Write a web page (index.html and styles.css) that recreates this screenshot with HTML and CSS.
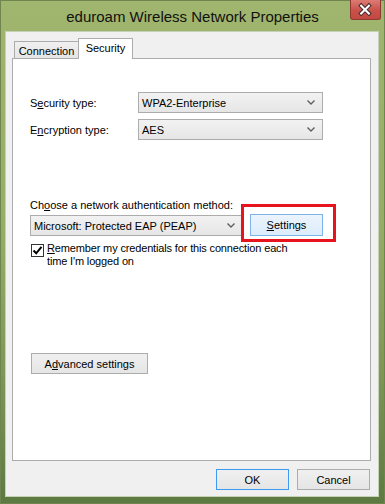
FILE: index.html
```html
<!DOCTYPE html>
<html lang="en">
<head>
    <meta charset="UTF-8">
    <meta name="viewport" content="width=device-width, initial-scale=1.0">
    <title>eduroam Wireless Network Properties</title>
    <link rel="stylesheet" href="styles.css">
</head>
<body>
    <!-- Janela principal -->
    <div class="window">
        <div class="titlebar">
            <span class="title">eduroam Wireless Network Properties</span>
            <div class="close-btn">
                <svg width="31" height="20" viewBox="0 0 31 20">
                    <path d="M11.5 5.5 L19.5 13.5 M19.5 5.5 L11.5 13.5" stroke="#3a2a2a" stroke-width="4.2" stroke-linecap="square" fill="none"/>
                    <path d="M11.5 5.5 L19.5 13.5 M19.5 5.5 L11.5 13.5" stroke="#ffffff" stroke-width="2.2" stroke-linecap="square" fill="none"/>
                </svg>
            </div>
        </div>

        <div class="client">
            <!-- Abas -->
            <div class="tabs">
                <div class="tab">Connection</div>
                <div class="tab active">Security</div>
            </div>

            <div class="panel">
                <div class="field-row first">
                    <span class="field-label">S<u>e</u>curity type:</span>
                    <div class="select wide">
                        <span>WPA2-Enterprise</span>
                        <svg class="chevron" width="8" height="5" viewBox="0 0 8 5"><path d="M0.5 0.5 L4 4 L7.5 0.5" stroke="#606060" stroke-width="1.4" fill="none"/></svg>
                    </div>
                </div>
                <div class="field-row">
                    <span class="field-label">E<u>n</u>cryption type:</span>
                    <div class="select wide">
                        <span>AES</span>
                        <svg class="chevron" width="8" height="5" viewBox="0 0 8 5"><path d="M0.5 0.5 L4 4 L7.5 0.5" stroke="#606060" stroke-width="1.4" fill="none"/></svg>
                    </div>
                </div>

                <div class="auth-label">Ch<u>o</u>ose a network authentication method:</div>
                <div class="auth-row">
                    <div class="select auth">
                        <span>Microsoft: Protected EAP (PEAP)</span>
                        <svg class="chevron" width="8" height="5" viewBox="0 0 8 5"><path d="M0.5 0.5 L4 4 L7.5 0.5" stroke="#606060" stroke-width="1.4" fill="none"/></svg>
                    </div>
                    <div class="settings-wrap">
                        <button class="btn settings"><u>S</u>ettings</button>
                        <span class="highlight"></span>
                    </div>
                </div>

                <div class="check-row">
                    <span class="checkbox">
                        <svg width="11" height="11" viewBox="0 0 11 11"><path d="M1.5 5.5 L4.2 8.3 L9.5 1.8" stroke="#000" stroke-width="2" fill="none"/></svg>
                    </span>
                    <span class="check-text">
                        <span class="check-line"><u>R</u>emember my credentials for this connection each</span>
                        <span class="check-line">time I'm logged on</span>
                    </span>
                </div>

                <button class="btn advanced">A<u>d</u>vanced settings</button>
            </div>

            <!-- Botoes de baixo -->
            <div class="footer">
                <button class="btn ok">OK</button>
                <button class="btn">Cancel</button>
            </div>
        </div>
    </div>
</body>
</html>
```

FILE: styles.css
```css
body {
    margin: 0;
    padding: 0;
    font-family: 'Liberation Sans', Arial, sans-serif;
    font-size: 11px;
    color: #000;
}

.window {
    width: 385px;
    height: 504px;
    box-sizing: border-box;
    border: 1px solid #6f8550;
    background: linear-gradient(to bottom, #a0b56d 0%, #96ad66 45%, #7d9656 75%, #5c7a41 100%);
    display: flex;
    flex-direction: column;
}

.titlebar {
    position: relative;
    height: 30px;
    display: flex;
    align-items: center;
    justify-content: center;
}

.title {
    font-size: 15px;
    color: #111;
    margin-top: 1px;
}

/* botao de fechar fica por cima da barra */
.close-btn {
    position: absolute;
    top: -1px;
    right: 3px;
    width: 31px;
    height: 20px;
    box-sizing: border-box;
    background: linear-gradient(to bottom, #dc7b73, #c9514a 55%, #c24a43);
    border: 1px solid #8e3a33;
    border-top: none;
    border-radius: 0 0 3px 3px;
    display: flex;
    align-items: center;
    justify-content: center;
}

.close-btn svg {
    display: block;
    margin-left: -1px;
}

.client {
    margin: 0 5px 6px 4px;
    flex: 1;
    background-color: #f0f0f0;
    border: 1px solid #c6d1b6;
    padding: 6px 8px 0 6px;
    display: flex;
    flex-direction: column;
}

.tabs {
    display: flex;
    align-items: flex-end;
    height: 20px;
    position: relative;
    z-index: 2;
}

.tab {
    box-sizing: border-box;
    height: 17px;
    width: 65px;
    margin-left: 2px;
    border: 1px solid #acacac;
    border-bottom: none;
    background: linear-gradient(to bottom, #f0f0f0, #e5e5e5);
    display: flex;
    align-items: center;
    justify-content: center;
    padding-top: 1px;
}

.tab.active {
    height: 21px;
    width: 55px;
    margin-left: -1px;
    margin-bottom: -1px;
    background: #fff;
    padding-top: 0;
    padding-bottom: 2px;
}

.panel {
    box-sizing: border-box;
    width: 359px;
    height: 403px;
    background: #fff;
    border: 1px solid #acacac;
    padding-left: 17px;
    display: flex;
    flex-direction: column;
    align-items: flex-start;
}

.field-row {
    display: flex;
    align-items: center;
    margin-top: 6px;
}

.field-row.first {
    margin-top: 33px;
}

.field-label {
    width: 108px;
}

.select {
    box-sizing: border-box;
    height: 21px;
    border: 1px solid #acacac;
    background: linear-gradient(to bottom, #f2f2f2, #e6e6e6);
    display: flex;
    align-items: center;
    justify-content: space-between;
    padding: 0 7px 0 3px;
}

.select.wide {
    width: 185px;
}

.select.auth {
    width: 213px;
}

.chevron {
    display: block;
}

.auth-label {
    line-height: 14px;
    margin-top: 58px;
}

.auth-row {
    display: flex;
    align-items: flex-start;
    margin-top: 3px;
}

.settings-wrap {
    position: relative;
    margin-left: 7px;
    margin-top: -1px;
}

.btn {
    box-sizing: border-box;
    height: 21px;
    border: 1px solid #acacac;
    background: linear-gradient(to bottom, #f0f0f0, #e5e5e5);
    font-family: 'Liberation Sans', Arial, sans-serif;
    font-size: 11px;
    color: #000;
    padding: 0;
    display: block;
}

.btn.settings {
    width: 73px;
    height: 22px;
    border-color: #7eb4ea;
    background: linear-gradient(to bottom, #ecf4fc, #dcecfc);
}

/* moldura vermelha por cima do botao */
.highlight {
    position: absolute;
    left: -9px;
    top: -10px;
    width: 95px;
    height: 38px;
    box-sizing: border-box;
    border: 3px solid #e8141d;
}

.check-row {
    display: flex;
    align-items: flex-start;
    margin-top: 6px;
    margin-left: 1px;
}

.checkbox {
    box-sizing: border-box;
    width: 13px;
    height: 13px;
    border: 1px solid #333;
    background: #fff;
    margin-top: 2px;
    display: flex;
    align-items: center;
    justify-content: center;
}

.checkbox svg {
    display: block;
}

.check-text {
    display: flex;
    flex-direction: column;
    margin-left: 3px;
    line-height: 13px;
    letter-spacing: -0.15px;
}

.check-line {
    white-space: nowrap;
}

.btn.advanced {
    width: 117px;
    margin-top: 85px;
    margin-left: 1px;
}

.footer {
    display: flex;
    justify-content: flex-end;
    gap: 8px;
    margin-top: 8px;
    padding-right: 0;
}

.footer .btn {
    width: 73px;
}

.btn.ok {
    border-color: #3c9bf0;
}
```
